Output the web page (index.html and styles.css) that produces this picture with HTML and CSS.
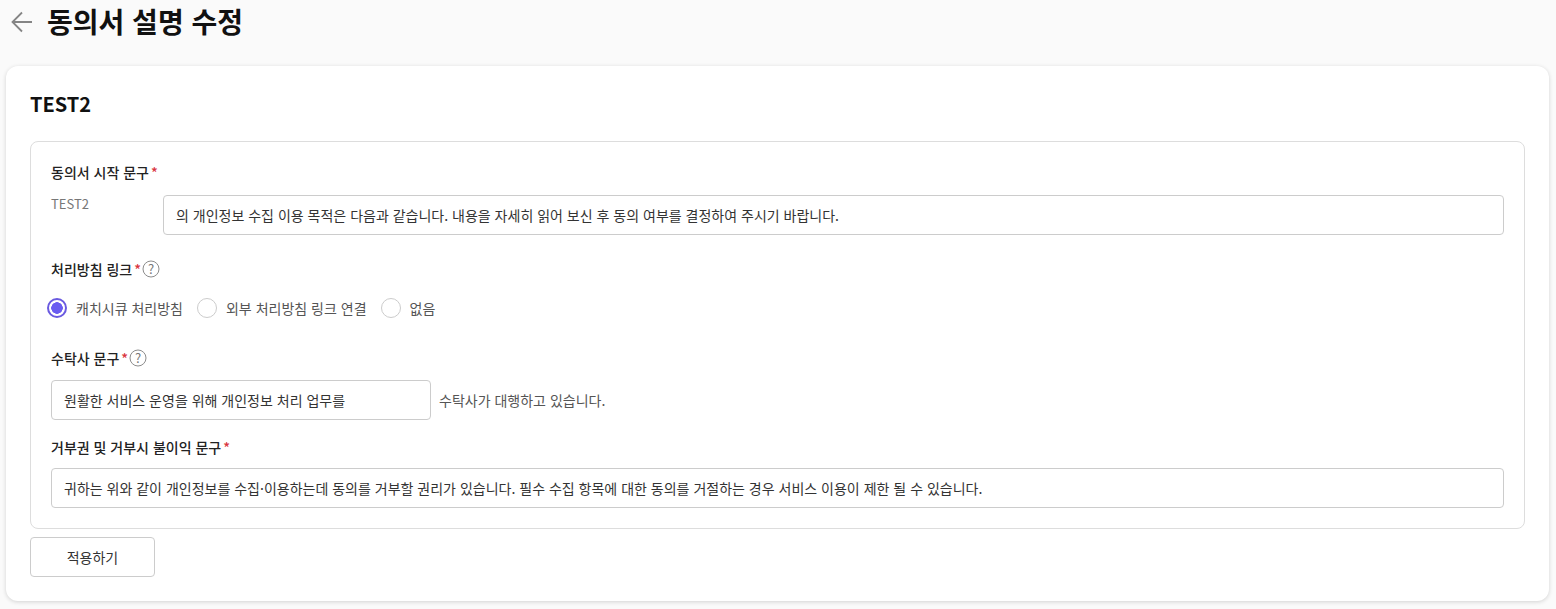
FILE: index.html
```html
<!DOCTYPE html>
<html lang="ko">
<head>
    <meta charset="UTF-8">
    <meta name="viewport" content="width=device-width, initial-scale=1.0">
    <title>동의서 설명 수정</title>
    <link rel="stylesheet" href="styles.css">
</head>
<body>
    <header class="page-header">
        <svg class="back-icon" width="24" height="24" viewBox="0 0 24 24" fill="none" stroke="#858585" stroke-width="1.8">
            <path d="M22 11H3M12 1.500L2.500 11 12 20.500"/>
        </svg>
        <h1>동의서 설명 수정</h1>
    </header>

    <main class="card">
        <h2>TEST2</h2>

        <div class="form-box">
            <div class="label label-first">동의서 시작 문구<span class="req">*</span></div>
            <div class="start-row">
                <span class="company">TEST2</span>
                <div class="input grow">의 개인정보 수집 이용 목적은 다음과 같습니다. 내용을 자세히 읽어 보신 후 동의 여부를 결정하여 주시기 바랍니다.</div>
            </div>

            <div class="label label-link">처리방침 링크<span class="req">*</span>
                <svg class="help" width="18" height="18" viewBox="0 0 18 18"><circle cx="9" cy="9" r="8" fill="none" stroke="#8c8c8c"/><text x="9" y="13.500" text-anchor="middle">?</text></svg>
            </div>
            <div class="radios">
                <label class="radio"><span class="dot on"></span>캐치시큐 처리방침</label>
                <label class="radio"><span class="dot"></span>외부 처리방침 링크 연결</label>
                <label class="radio"><span class="dot"></span>없음</label>
            </div>

            <div class="label label-trust">수탁사 문구<span class="req">*</span>
                <svg class="help" width="18" height="18" viewBox="0 0 18 18"><circle cx="9" cy="9" r="8" fill="none" stroke="#8c8c8c"/><text x="9" y="13.500" text-anchor="middle">?</text></svg>
            </div>
            <div class="trust-row">
                <div class="input trust-input">원활한 서비스 운영을 위해 개인정보 처리 업무를</div>
                <span class="suffix">수탁사가 대행하고 있습니다.</span>
            </div>

            <div class="label label-refuse">거부권 및 거부시 불이익 문구<span class="req">*</span></div>
            <div class="input">귀하는 위와 같이 개인정보를 수집·이용하는데 동의를 거부할 권리가 있습니다. 필수 수집 항목에 대한 동의를 거절하는 경우 서비스 이용이 제한 될 수 있습니다.</div>
        </div>

        <button class="apply">적용하기</button>
    </main>
</body>
</html>
```

FILE: styles.css
```css
html, body {
    height: 100%;
}
body {
    margin: 0;
    background: #fafafa;
    font-family: "Noto Sans CJK KR", "Noto Sans", sans-serif;
    font-size: 14px;
    color: #333;
    overflow: hidden;
}
.page-header {
    display: flex;
    align-items: flex-start;
    height: 45px;
    padding-left: 10px;
}
.back-icon {
    margin: 11px 13px 0 0;
}
h1 {
    margin: 0;
    font-size: 28px;
    line-height: 42px;
    font-weight: 700;
    color: #111;
}
.card {
    box-sizing: border-box;
    width: 1543px;
    height: 535px;
    margin: 21px 0 0 6px;
    padding: 24px;
    background: #fff;
    border-radius: 12px;
    box-shadow: 0 1px 4px rgba(0, 0, 0, 0.16);
}
h2 {
    margin: 0;
    height: 51px;
    font-size: 20px;
    line-height: 27px;
    font-weight: 700;
    color: #111;
}
.form-box {
    box-sizing: border-box;
    height: 388px;
    padding: 20px;
    border: 1px solid #ddd;
    border-radius: 8px;
}
.label {
    display: flex;
    align-items: center;
    height: 20px;
    font-weight: 500;
    color: #222;
}
.req {
    margin-left: 2px;
    color: #d9363e;
}
.help {
    margin-left: 1px;
}
.help text {
    font-size: 13px;
    font-weight: 400;
    fill: #777;
}
.start-row {
    display: flex;
    margin-top: 13px;
}
.company {
    width: 112px;
    flex: none;
    color: #777;
    font-size: 13px;
    line-height: 18px;
}
.input {
    box-sizing: border-box;
    height: 40px;
    padding: 0 12px;
    border: 1px solid #ccc;
    border-radius: 4px;
    line-height: 38px;
    background: #fff;
    color: #333;
}
.grow {
    flex: 1;
}
.label-link {
    margin-top: 24px;
}
.radios {
    display: flex;
    align-items: center;
    gap: 14px;
    margin: 19px 0 0 -4px;
}
.radio {
    display: flex;
    align-items: center;
    color: #555;
}
.dot {
    box-sizing: border-box;
    width: 20px;
    height: 20px;
    margin-right: 9px;
    border: 1px solid #ccc;
    border-radius: 50%;
    background: #fff;
}
.dot.on {
    border: 2px solid #6a5ae0;
    background: radial-gradient(circle, #6a5cf0 0 5.5px, #fff 6px);
}
.label-trust {
    margin-top: 30px;
}
.trust-row {
    display: flex;
    align-items: center;
    margin-top: 12px;
}
.trust-input {
    width: 380px;
}
.suffix {
    margin-left: 8px;
    color: #555;
}
.label-refuse {
    margin-top: 17px;
    margin-bottom: 11px;
}
.apply {
    display: block;
    width: 125px;
    height: 40px;
    margin-top: 8px;
    border: 1px solid #ccc;
    border-radius: 4px;
    background: #fff;
    color: #333;
    font-family: inherit;
    font-size: 14px;
    cursor: pointer;
}
```
